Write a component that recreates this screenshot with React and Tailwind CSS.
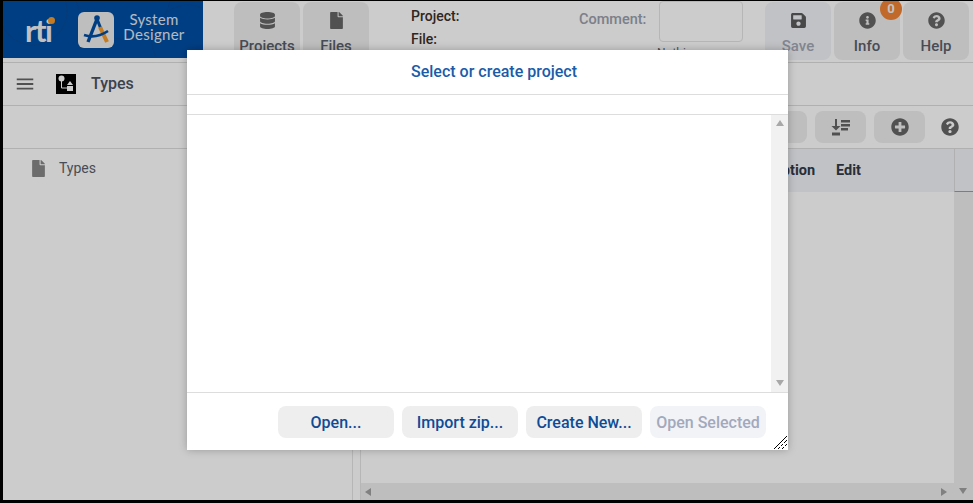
import {
  FaDatabase,
  FaFile,
  FaSave,
  FaInfoCircle,
  FaQuestionCircle,
  FaPlusCircle,
} from "react-icons/fa";
import { MdMenu } from "react-icons/md";

function Logo() {
  return (
    <div className="relative flex h-[57px] w-[200px] shrink-0 items-center overflow-hidden bg-[#004ea4]">
      {/* faint curves behind the logo */}
      <svg className="absolute inset-0" width="200" height="57" fill="none" stroke="#084a98" strokeWidth="1">
        <circle cx="30" cy="10" r="34" />
        <circle cx="120" cy="-10" r="48" />
        <circle cx="185" cy="40" r="36" />
      </svg>
      <div className="relative ml-[22px] mt-[1px] w-[30px] text-[31px] font-bold leading-none tracking-[-1.5px] text-[#f2f2f2] font-['Lato',sans-serif]">
        rti
        <span className="absolute right-[0px] top-[2px] h-[7px] w-[7px] rounded-full bg-[#f59a2a]" />
      </div>
      <div className="relative ml-[23px] flex h-[36px] w-[36px] items-center justify-center rounded-[6px] bg-[#eeeeee]">
        <svg width="28" height="32" viewBox="0 0 28 32" fill="none">
          <circle cx="15" cy="4" r="2.8" fill="#004ea4" />
          <path d="M15 5 L6 28" stroke="#004ea4" strokeWidth="3.4" />
          <path d="M15 5 L19 15" stroke="#004ea4" strokeWidth="3" />
          <path d="M18 13 L25 28" stroke="#f59a2a" strokeWidth="4" />
          <path d="M2 21 Q14 25 26 17" stroke="#004ea4" strokeWidth="2.6" />
        </svg>
      </div>
      <div className="relative -mt-[6px] ml-[5px] w-[70px] text-center text-[15px] font-normal leading-[15px] tracking-[0.3px] text-[#e4e8f0] font-['Lato',sans-serif]">
        <div>System</div>
        <div>Designer</div>
      </div>
    </div>
  );
}

function HeaderButton({ icon, label, disabled }) {
  return (
    <div
      className={`flex h-[58px] w-[66px] shrink-0 flex-col items-center rounded-lg pt-[10px] ${
        disabled ? "bg-[#f2f3f7] text-[#a2a7b4]" : "bg-[#eeeeee] text-[#5a5f6c]"
      }`}
    >
      <div className={`h-[18px] text-[17px] ${disabled ? "text-[#5a5a5a]" : "text-[#666666]"}`}>{icon}</div>
      <div className="mt-[6px] text-[15px] font-medium leading-[20px]">{label}</div>
    </div>
  );
}

function ToolButton({ children }) {
  return (
    <div className="flex h-[32px] w-[51px] items-center justify-center rounded-lg bg-[#eeeeee] text-[18px] text-[#666666]">
      {children}
    </div>
  );
}

function SortIcon() {
  return (
    <svg width="20" height="18" viewBox="0 0 20 18" fill="#666666">
      <path d="M4 1h2v7h3.5L5 12.5.5 8H4z" />
      <rect x="10" y="2" width="9" height="2.5" />
      <rect x="10" y="6" width="9" height="2.5" />
      <rect x="10" y="10" width="7" height="2.5" />
      <rect x="1" y="14.5" width="8" height="3" />
    </svg>
  );
}

function TypesIcon() {
  return (
    <svg width="20" height="20" viewBox="0 0 20 20" className="shrink-0 bg-black">
      <circle cx="5.5" cy="4.5" r="3" fill="#ffffff" />
      <path d="M5.5 7v7h6" stroke="#ffffff" strokeWidth="1" fill="none" />
      <path d="M14 7l3 4h-6z" fill="#ffffff" />
      <rect x="11" y="12" width="6" height="5" fill="#ffffff" />
    </svg>
  );
}

function Arrow({ dir, className }) {
  const points = {
    up: "0,6 8,6 4,0",
    down: "0,0 8,0 4,6",
    left: "6,0 6,8 0,4",
    right: "0,0 0,8 6,4",
  };
  return (
    <svg width="8" height="8" viewBox="0 0 8 8" className={className}>
      <polygon points={points[dir]} fill="currentColor" />
    </svg>
  );
}

function Background() {
  return (
    <div className="flex h-full flex-col bg-white">
      <div className="flex h-[62px] shrink-0 items-start overflow-hidden border-b border-[#dddddd]">
        <Logo />
        <div className="ml-[31px] mt-px flex gap-[3px]">
          <HeaderButton icon={<FaDatabase />} label="Projects" />
          <HeaderButton icon={<FaFile />} label="Files" />
        </div>
        <div className="ml-[42px] mt-[4px] w-[168px] text-[14px] font-medium leading-[23px] text-[#3b2f2a]">
          <div>Project:</div>
          <div>File:</div>
        </div>
        <div className="mt-[9px] w-[80px] text-[14.5px] font-medium leading-[20px] text-[#9aa0ad]">Comment:</div>
        <div className="flex flex-col">
          <div className="h-[41px] w-[84px] rounded-sm border border-[#e4e4e4]" />
          <div className="-ml-[2px] mt-[3px] text-[12px] leading-[16px] text-[#666666]">Nothing</div>
        </div>
        <div className="ml-[22px] mt-px flex gap-[3px]">
          <HeaderButton icon={<FaSave />} label="Save" disabled />
          <div className="relative">
            <HeaderButton icon={<FaInfoCircle />} label="Info" />
            <div className="absolute -top-[4px] left-[46px] flex h-[22px] w-[22px] items-center justify-center rounded-full bg-[#f08436] text-[13px] font-bold text-[#f5f5f5]">
              0
            </div>
          </div>
          <HeaderButton icon={<FaQuestionCircle />} label="Help" />
        </div>
      </div>

      <div className="flex h-[43px] shrink-0 items-center border-b border-[#dddddd]">
        <MdMenu className="ml-[11px] text-[22px] text-[#666666]" />
        <div className="ml-[20px]">
          <TypesIcon />
        </div>
        <div className="ml-[15px] text-[16px] font-medium text-[#4c5260]">Types</div>
      </div>

      <div className="flex h-[43px] shrink-0 items-center justify-end gap-[8px] border-b border-[#dddddd] pr-[14px]">
        <ToolButton />
        <ToolButton>
          <SortIcon />
        </ToolButton>
        <ToolButton>
          <FaPlusCircle />
        </ToolButton>
        <FaQuestionCircle className="ml-[8px] text-[18px] text-[#666666]" />
      </div>

      <div className="flex min-h-0 flex-1">
        <div className="w-[350px] shrink-0 border-r border-[#e4e4e4] pl-[27px] pt-[9px]">
          <div className="flex items-center gap-[12px] text-[14px] text-[#5a5f6c]">
            <FaFile className="text-[17px] text-[#888888]" />
            Types
          </div>
        </div>
        <div className="ml-[7px] flex min-w-0 flex-1 flex-col border-l border-[#e4e4e4]">
          <div className="flex min-h-0 flex-1">
            <div className="flex min-w-0 flex-1 flex-col">
              <div className="flex h-[43px] shrink-0 items-center justify-end gap-[21px] bg-[#f2f3f7] pr-[93px] text-[14.5px] font-bold text-[#333a48]">
                <span>Description</span>
                <span>Edit</span>
              </div>
              <div className="flex-1" />
            </div>
            <div className="flex w-[19px] shrink-0 flex-col bg-[#eeeeee]">
              <div className="h-[43px] shrink-0 border-b border-[#f08a24] border-l border-l-[#dddddd] bg-[#f2f3f7]" />
            </div>
          </div>
          <div className="flex h-[17px] shrink-0 items-center justify-between bg-[#eeeeee] pl-[4px] pr-[6px]">
            <Arrow dir="left" className="text-[#a0a0a0]" />
            <div className="flex items-center gap-[10px]">
              <Arrow dir="right" className="text-[#a0a0a0]" />
              <Arrow dir="down" className="text-[#a0a0a0]" />
            </div>
          </div>
        </div>
      </div>
    </div>
  );
}

function ModalButton({ label, disabled }) {
  return (
    <button
      disabled={disabled}
      className={`h-[32px] w-[116px] rounded-lg pt-[2px] text-[16px] font-medium ${
        disabled ? "bg-[#f2f3f7] text-[#a2a9bc]" : "bg-[#eeeeee] text-[#0f4c96]"
      }`}
    >
      {label}
    </button>
  );
}

export default function App() {
  return (
    <div className="relative h-[503px] w-[973px] overflow-hidden bg-black pb-[3px] pl-[3px] pt-px font-['Roboto',sans-serif]">
      <Background />

      {/* dim layer over the page, the frame stays black */}
      <div className="absolute bottom-[3px] left-[3px] right-0 top-px bg-black/20" />

      <div className="absolute left-[187px] top-[50px] flex h-[400px] w-[601px] flex-col bg-white shadow-[0_0_8px_rgba(0,0,0,0.25)]">
        <div className="box-content flex h-[44px] shrink-0 items-center justify-center border-b border-[#dddddd] pl-[13px] text-[16px] font-medium text-[#1a5ca8]">
          Select or create project
        </div>
        <div className="box-content h-[19px] shrink-0 border-b border-[#dddddd]" />
        <div className="flex min-h-0 flex-1 justify-end">
          <div className="flex w-[17px] flex-col items-center justify-between bg-[#f1f1f1] pb-[4px] pt-[5px] text-[#a8a8a8]">
            <Arrow dir="up" />
            <Arrow dir="down" />
          </div>
        </div>
        <div className="relative flex h-[58px] shrink-0 justify-end gap-[8px] border-t border-[#dddddd] pr-[22px] pt-[13px]">
          <ModalButton label="Open..." />
          <ModalButton label="Import zip..." />
          <ModalButton label="Create New..." />
          <ModalButton label="Open Selected" disabled />
          {/* resize grip */}
          <svg className="absolute bottom-[1px] right-[1px]" width="13" height="13" viewBox="0 0 13 13" fill="#000000" shapeRendering="crispEdges">
            <path d="M0 12h1v1H0zM1 11h1v1H1zM2 10h1v1H2zM3 9h1v1H3zM4 8h1v1H4zM5 7h1v1H5zM6 6h1v1H6zM7 5h1v1H7zM8 4h1v1H8zM9 3h1v1H9zM10 2h1v1h-1zM11 1h1v1h-1zM12 0h1v1h-1z" />
            <path d="M4 12h1v1H4zM5 11h1v1H5zM7 9h1v1H7zM8 8h1v1H8zM10 6h1v1h-1zM11 5h1v1h-1zM12 4h1v1h-1z" />
            <path d="M8 12h1v1H8zM9 11h1v1H9zM11 9h1v1h-1zM12 8h1v1h-1z" />
          </svg>
        </div>
      </div>
    </div>
  );
}
